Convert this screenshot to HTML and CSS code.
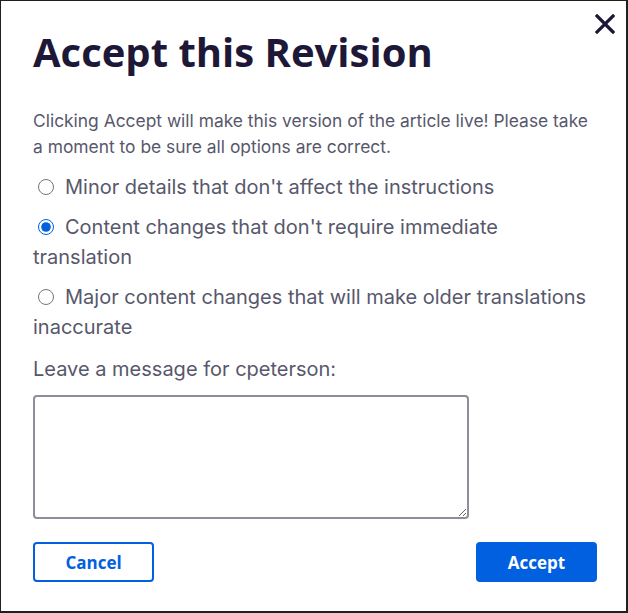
FILE: index.html
```html
<!DOCTYPE html>
<html lang="en">
<head>
<meta charset="utf-8">
<title>Accept this Revision</title>
<link rel="stylesheet" href="styles.css">
</head>
<body>
<div class="dialog">
  <button class="close" aria-label="Close">
    <svg width="20" height="20" viewBox="0 0 20 20"><path d="M2 2L18 18M18 2L2 18" stroke="#1e1838" stroke-width="3.2" stroke-linecap="square"/></svg>
  </button>
  <h1 class="title">Accept this Revision</h1>
  <p class="intro">Clicking Accept will make this version of the article live! Please take a moment to be sure all options are correct.</p>
  <div class="options">
    <label class="option"><input type="radio" name="sig">Minor details that don't affect the instructions</label>
    <label class="option"><input type="radio" name="sig" checked>Content changes that don't require immediate translation</label>
    <label class="option"><input type="radio" name="sig">Major content changes that will make older translations inaccurate</label>
  </div>
  <label class="msg-label" for="msg">Leave a message for cpeterson:</label>
  <textarea id="msg" class="msg"></textarea>
  <div class="actions">
    <button class="btn btn-outline">Cancel</button>
    <button class="btn btn-primary">Accept</button>
  </div>
</div>
</body>
</html>
```
FILE: styles.css
```css
html, body {
  margin: 0;
  padding: 0;
  background: #1c231f;
}
.dialog {
  position: relative;
  box-sizing: border-box;
  margin: 1px 2px 2px 1px;
  height: 610px;
  background: #fff;
  padding: 28px 29px 0 32px;
  font-family: Inter, "Noto Sans", sans-serif;
  color: #57586c;
}
.close {
  position: absolute;
  top: 13px;
  right: 11px;
  border: 0;
  background: none;
  padding: 0;
  width: 20px;
  height: 20px;
  cursor: pointer;
}
.close svg { display: block; }
.title {
  margin: 0;
  font-family: "Open Sans", "Noto Sans", sans-serif;
  font-weight: 700;
  font-size: 40px;
  line-height: 46px;
  color: #1e1838;
}
.intro {
  margin: 33px 0 0;
  font-size: 17.4px;
  line-height: 26px;
}
.options {
  margin-top: 12px;
  display: flex;
  flex-direction: column;
  gap: 10px;
}
.option {
  font-size: 20px;
  line-height: 30px;
}
.option input {
  width: 16px;
  height: 16px;
  margin: 0 11px 0 5px;
  vertical-align: -1px;
  accent-color: #0060df;
}
.msg-label {
  display: block;
  margin-top: 12px;
  font-size: 20px;
  line-height: 30px;
}
.msg {
  display: block;
  box-sizing: border-box;
  margin-top: 11px;
  width: 436px;
  height: 124px;
  border: 2px solid #8e8e9a;
  border-radius: 4px;
  resize: both;
}
.actions {
  margin-top: 23px;
  display: flex;
  justify-content: space-between;
}
.btn {
  box-sizing: border-box;
  height: 40px;
  width: 121px;
  border-radius: 4px;
  font-family: "Open Sans", "Noto Sans", sans-serif;
  font-weight: 700;
  font-size: 17px;
  cursor: pointer;
}
.btn-outline {
  background: #fff;
  color: #0060df;
  border: 2px solid #0060df;
}
.btn-primary {
  background: #0060df;
  color: #fff;
  border: 2px solid #0060df;
}
```
